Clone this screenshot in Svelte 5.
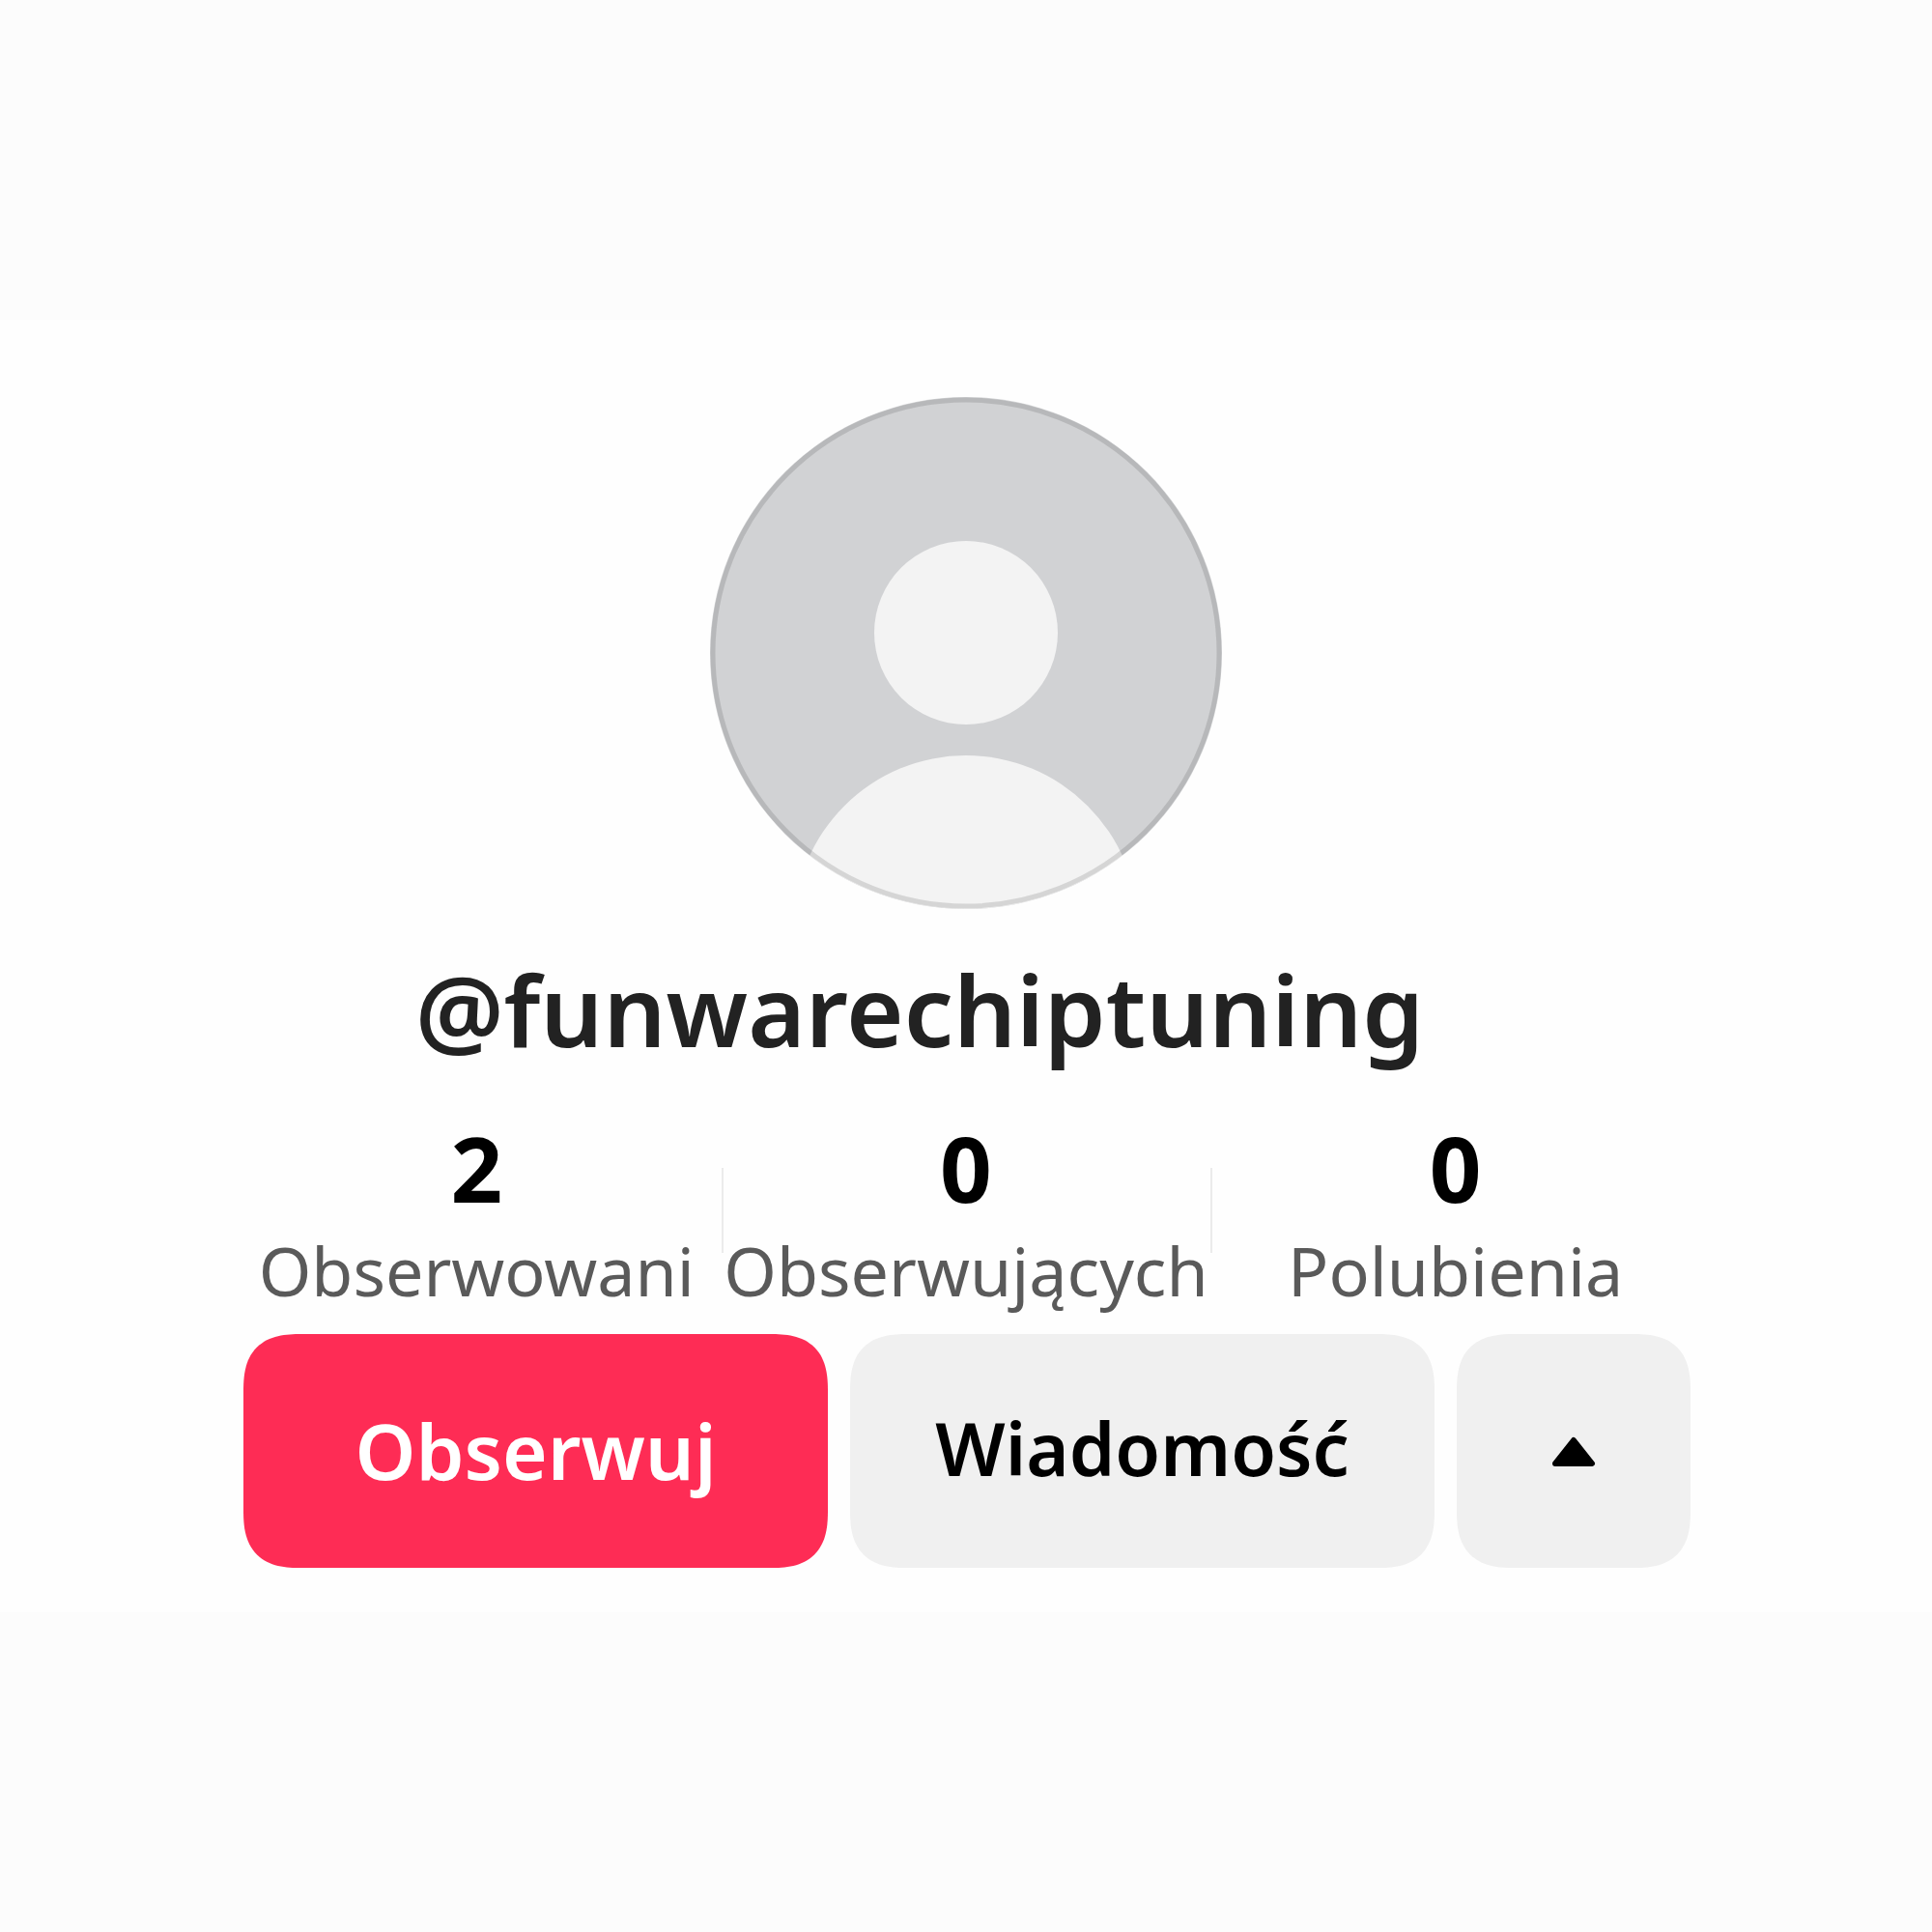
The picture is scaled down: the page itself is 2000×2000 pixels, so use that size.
<script>
  const username = '@funwarechiptuning';

  const stats = [
    { value: 2, label: 'Obserwowani' },
    { value: 0, label: 'Obserwujących' },
    { value: 0, label: 'Polubienia' },
  ];

  let following = false;
</script>

<main>
  <section class="profile">
    <svg class="avatar" viewBox="0 0 530 530" role="img" aria-label="Avatar">
      <defs>
        <clipPath id="avatar-clip">
          <circle cx="265" cy="265" r="265" />
        </clipPath>
      </defs>
      <g clip-path="url(#avatar-clip)">
        <rect width="530" height="530" fill="#d1d2d4" />
        <circle cx="265" cy="244" r="95" fill="#f3f3f3" />
        <circle cx="265" cy="549" r="178" fill="#f3f3f3" />
      </g>
      <circle cx="265" cy="265" r="262" fill="none" stroke="#000" stroke-opacity="0.12" stroke-width="5" />
    </svg>

    <h1 class="username">{username}</h1>

    <div class="stats">
      {#each stats as stat}
        <div class="stat">
          <strong>{stat.value}</strong>
          <span>{stat.label}</span>
        </div>
      {/each}
    </div>

    <div class="actions">
      <button class="follow" aria-pressed={following} on:click={() => (following = !following)}>
        Obserwuj
      </button>
      <button class="message">Wiadomość</button>
      <button class="more" aria-label="Sugerowane konta">
        <svg viewBox="0 0 46 36" width="46" height="36">
          <path d="M23 7 42 31H4Z" stroke="#000" stroke-width="6" stroke-linejoin="round" />
        </svg>
      </button>
    </div>
  </section>
</main>

<style>
  :global(body) {
    background: #fcfcfc;
  }

  main {
    min-height: 100vh;
    display: flex;
    flex-direction: column;
    justify-content: center;
    font-family: 'Noto Sans', 'Open Sans', sans-serif;
    color: #000;
  }

  .profile {
    display: flex;
    flex-direction: column;
    align-items: center;
    padding: 80px 12% 46px;
    background: #fefefe;
  }

  .avatar {
    display: block;
    width: 530px;
    height: 530px;
  }

  .username {
    margin: 36px 0 0;
    padding-right: 96px;
    font-size: 102px;
    font-weight: 600;
    line-height: 136px;
    color: #222;
  }

  .stats {
    display: grid;
    grid-template-columns: repeat(3, 1fr);
    width: 100%;
    margin-top: 40px;
  }

  .stat {
    position: relative;
    display: flex;
    flex-direction: column;
    align-items: center;
    white-space: nowrap;
  }

  .stat + .stat::before {
    content: '';
    position: absolute;
    left: 0;
    top: 56px;
    width: 2px;
    height: 88px;
    background: #ebebeb;
  }

  .stat strong {
    font-size: 94px;
    font-weight: 700;
    line-height: 112px;
  }

  .stat span {
    font-size: 70px;
    line-height: 100px;
    color: #5a5a5a;
  }

  .actions {
    display: flex;
    gap: 23px;
    box-sizing: border-box;
    width: 100%;
    margin-top: 16px;
    padding: 0 10px 0 12px;
  }

  button {
    display: flex;
    align-items: center;
    justify-content: center;
    height: 242px;
    padding: 0;
    border: 0;
    border-radius: 60px;
    corner-shape: superellipse(1.4);
    background: #f0f0f0;
    color: #000;
    font-family: inherit;
    font-size: 76px;
    font-weight: 600;
    cursor: pointer;
  }

  .follow,
  .message {
    flex: 1;
  }

  .follow {
    padding-bottom: 4px;
    background: #fe2c55;
    color: #fff;
    font-size: 80px;
  }

  .message {
    padding-bottom: 8px;
  }

  .more {
    width: 242px;
  }
</style>
